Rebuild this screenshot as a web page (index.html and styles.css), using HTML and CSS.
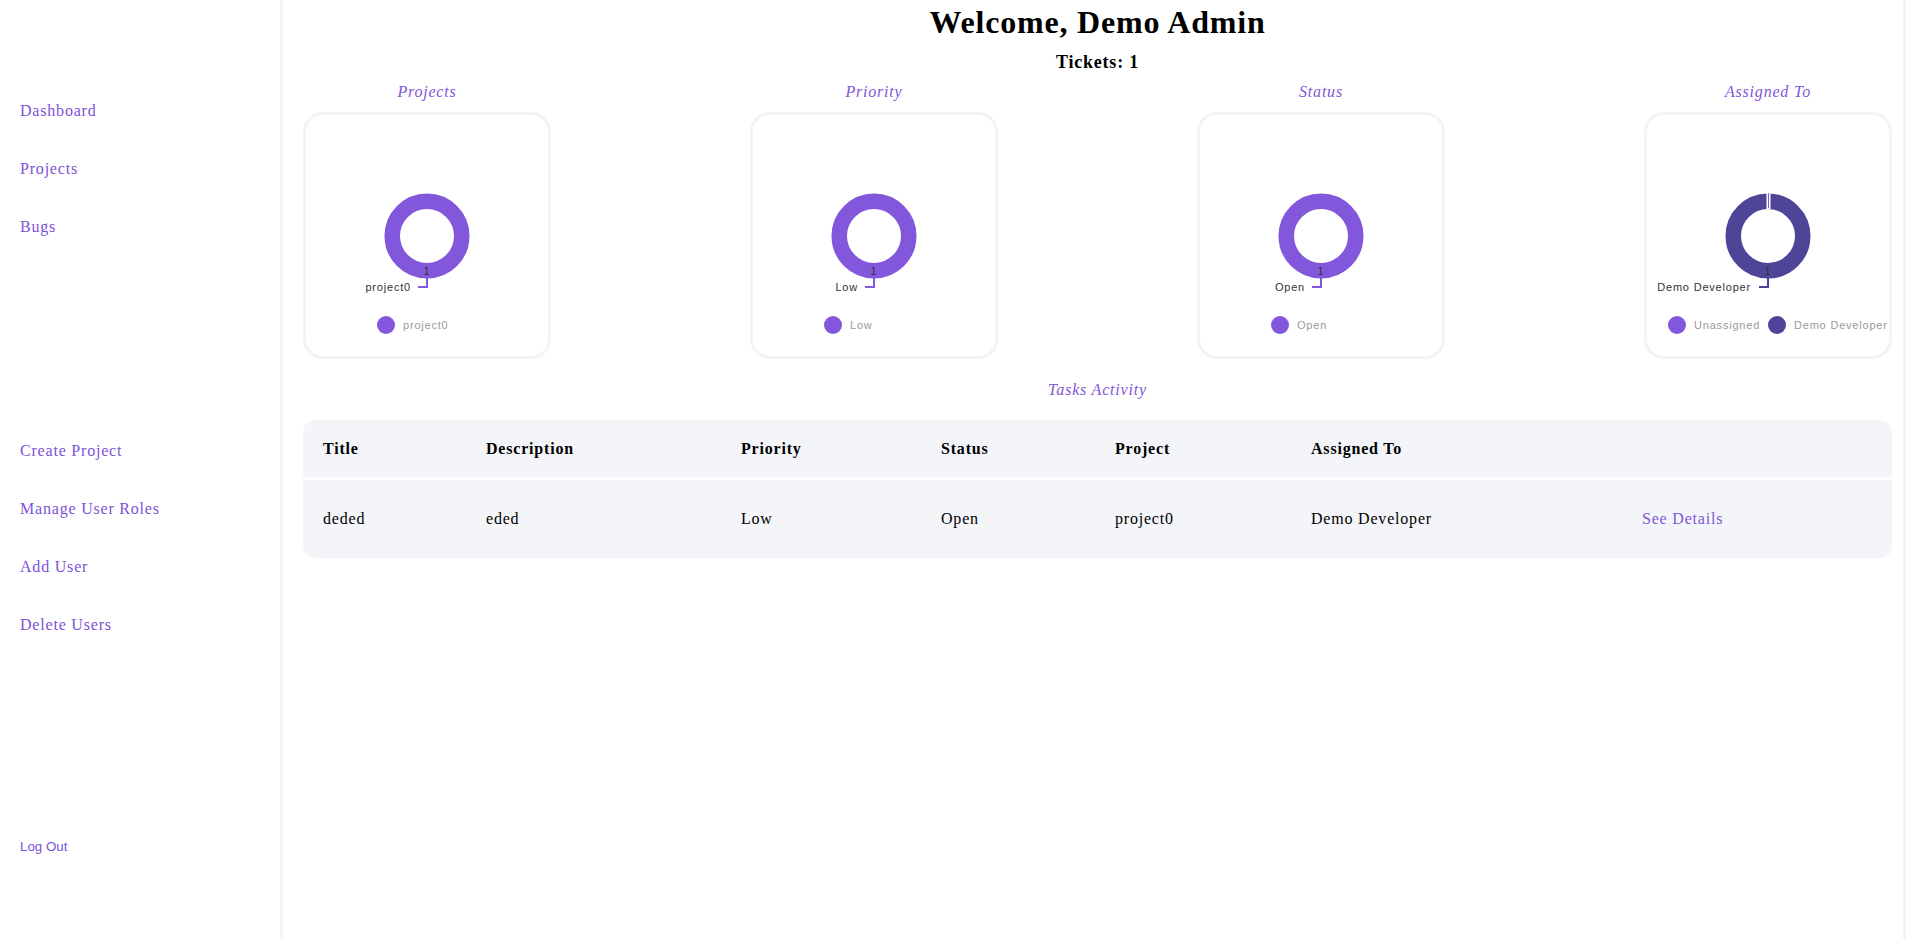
FILE: index.html
```html
<!DOCTYPE html>
<html lang="en">
<head>
<meta charset="utf-8">
<title>Dashboard</title>
<link rel="stylesheet" href="styles.css">
</head>
<body>
<div class="app">
  <aside class="sidebar">
    <nav class="nav nav-top">
      <a class="nav-link" href="#">Dashboard</a>
      <a class="nav-link" href="#">Projects</a>
      <a class="nav-link" href="#">Bugs</a>
    </nav>
    <nav class="nav nav-admin">
      <a class="nav-link" href="#">Create Project</a>
      <a class="nav-link" href="#">Manage User Roles</a>
      <a class="nav-link" href="#">Add User</a>
      <a class="nav-link" href="#">Delete Users</a>
    </nav>
    <button class="logout" type="button">Log Out</button>
  </aside>

  <main class="main">
    <h1 class="welcome">Welcome, Demo Admin</h1>
    <h3 class="tickets">Tickets: 1</h3>

    <section class="charts">
      <div class="chart-col">
        <div class="chart-title">Projects</div>
        <div class="chart-card">
          <svg class="chart-svg" width="242" height="241" viewBox="0 0 242 241">
            <circle cx="121" cy="121" r="34.75" fill="none" stroke="#8257db" stroke-width="15.5"/>
            <text class="arc-label" x="121" y="156">1</text>
            <polyline class="link" points="121,163 121,172 112,172" stroke="#8257db"/>
            <text class="link-label" x="105" y="172" text-anchor="end">project0</text>
            <circle cx="80" cy="210" r="9" fill="#8257db"/>
            <text class="legend-text" x="97" y="210">project0</text>
          </svg>
        </div>
      </div>

      <div class="chart-col">
        <div class="chart-title">Priority</div>
        <div class="chart-card">
          <svg class="chart-svg" width="242" height="241" viewBox="0 0 242 241">
            <circle cx="121" cy="121" r="34.75" fill="none" stroke="#8257db" stroke-width="15.5"/>
            <text class="arc-label" x="121" y="156">1</text>
            <polyline class="link" points="121,163 121,172 112,172" stroke="#8257db"/>
            <text class="link-label" x="105" y="172" text-anchor="end">Low</text>
            <circle cx="80" cy="210" r="9" fill="#8257db"/>
            <text class="legend-text" x="97" y="210">Low</text>
          </svg>
        </div>
      </div>

      <div class="chart-col">
        <div class="chart-title">Status</div>
        <div class="chart-card">
          <svg class="chart-svg" width="242" height="241" viewBox="0 0 242 241">
            <circle cx="121" cy="121" r="34.75" fill="none" stroke="#8257db" stroke-width="15.5"/>
            <text class="arc-label" x="121" y="156">1</text>
            <polyline class="link" points="121,163 121,172 112,172" stroke="#8257db"/>
            <text class="link-label" x="105" y="172" text-anchor="end">Open</text>
            <circle cx="80" cy="210" r="9" fill="#8257db"/>
            <text class="legend-text" x="97" y="210">Open</text>
          </svg>
        </div>
      </div>

      <div class="chart-col">
        <div class="chart-title">Assigned To</div>
        <div class="chart-card">
          <svg class="chart-svg" width="242" height="241" viewBox="0 0 242 241">
            <circle cx="121" cy="121" r="34.75" fill="none" stroke="#4e4599" stroke-width="15.5"/>
            <rect x="119.5" y="77" width="4" height="17" fill="#ffffff"/>
            <rect x="121" y="78" width="1" height="15" fill="#8257db"/>
            <text class="arc-label" x="121" y="156">1</text>
            <polyline class="link" points="121,163 121,172 112,172" stroke="#4e4599"/>
            <text class="link-label" x="104" y="172" text-anchor="end">Demo Developer</text>
            <circle cx="30" cy="210" r="9" fill="#8257db"/>
            <text class="legend-text" x="47" y="210">Unassigned</text>
            <circle cx="130" cy="210" r="9" fill="#4e4599"/>
            <text class="legend-text" x="147" y="210">Demo Developer</text>
          </svg>
        </div>
      </div>
    </section>

    <div class="section-title">Tasks Activity</div>

    <table class="tasks">
      <colgroup>
        <col class="c-title">
        <col class="c-desc">
        <col class="c-prio">
        <col class="c-status">
        <col class="c-project">
        <col class="c-assigned">
        <col class="c-action">
      </colgroup>
      <thead>
        <tr>
          <th>Title</th>
          <th>Description</th>
          <th>Priority</th>
          <th>Status</th>
          <th>Project</th>
          <th>Assigned To</th>
          <th></th>
        </tr>
      </thead>
      <tbody>
        <tr>
          <td>deded</td>
          <td>eded</td>
          <td>Low</td>
          <td>Open</td>
          <td>project0</td>
          <td>Demo Developer</td>
          <td><a class="details" href="#">See Details</a></td>
        </tr>
      </tbody>
    </table>
  </main>
</div>
</body>
</html>
```

FILE: styles.css
```css
html, body {
  margin: 0;
  padding: 0;
  background: #ffffff;
}

body {
  font-family: "Liberation Serif", "Times New Roman", serif;
  font-size: 16px;
  letter-spacing: 0.05em;
  color: #000000;
}

.app {
  display: flex;
  height: 939px;
  width: 1906px;
}

/* Sidebar */
.sidebar {
  width: 280px;
  flex: 0 0 280px;
  border-right: 3px solid #f2f2f7;
  display: flex;
  flex-direction: column;
}

.nav {
  display: flex;
  flex-direction: column;
}

.nav-top {
  padding-top: 82px;
}

.nav-admin {
  margin-top: 166px;
}

.nav-link {
  display: block;
  height: 58px;
  line-height: 58px;
  padding-left: 20px;
  color: #7c52d9;
  text-decoration: none;
  font-size: 16px;
}

.logout {
  margin-top: auto;
  margin-bottom: 84px;
  align-self: flex-start;
  margin-left: 20px;
  padding: 0;
  border: none;
  background: transparent;
  color: #7c52d9;
  font-family: "Liberation Sans", Arial, sans-serif;
  font-size: 13.333px;
  line-height: 16px;
  letter-spacing: normal;
  cursor: pointer;
}

/* Main */
.main {
  flex: 1;
  border-right: 3px solid #f2f2f7;
  padding: 0 11px 0 20px;
  min-width: 0;
}

.welcome {
  margin: 4px 0 0;
  font-size: 32px;
  line-height: 37px;
  text-align: center;
  font-weight: bold;
}

.tickets {
  margin: 10px 0 0;
  font-size: 18px;
  line-height: 22px;
  text-align: center;
  font-weight: bold;
}

.charts {
  margin-top: 10px;
  display: flex;
  justify-content: space-between;
}

.chart-col {
  width: 248px;
  display: flex;
  flex-direction: column;
  align-items: center;
}

.chart-title,
.section-title {
  font-style: italic;
  color: #7f56d9;
  font-size: 16px;
  line-height: 18px;
  text-align: center;
}

.chart-card {
  margin-top: 11px;
  width: 248px;
  height: 247px;
  box-sizing: border-box;
  border: 3px solid #f2f3f7;
  border-radius: 20px;
}

.chart-svg {
  display: block;
  overflow: visible;
  font-family: "Liberation Sans", Arial, sans-serif;
  font-size: 11px;
}

.arc-label {
  fill: #333333;
  text-anchor: middle;
  dominant-baseline: central;
}

.link {
  fill: none;
  stroke-width: 2;
}

.link-label {
  fill: #333333;
  dominant-baseline: central;
}

.legend-text {
  fill: #999999;
  dominant-baseline: central;
}

.section-title {
  margin-top: 22px;
}

/* Table */
.tasks {
  margin-top: 21px;
  width: 100%;
  table-layout: fixed;
  border-collapse: separate;
  border-spacing: 0;
}

.c-title { width: 163px; }
.c-desc { width: 255px; }
.c-prio { width: 200px; }
.c-status { width: 174px; }
.c-project { width: 196px; }
.c-assigned { width: 331px; }
.c-action { width: 270px; }

.tasks th,
.tasks td {
  background: #f4f5f9;
  text-align: left;
  padding: 0 0 0 20px;
  font-size: 16px;
}

.tasks th {
  height: 57px;
  font-weight: bold;
  border-bottom: 3px solid #ffffff;
}

.tasks td {
  height: 78px;
}

.tasks thead th:first-child { border-top-left-radius: 12px; }
.tasks thead th:last-child { border-top-right-radius: 12px; }
.tasks tbody td:first-child { border-bottom-left-radius: 12px; }
.tasks tbody td:last-child { border-bottom-right-radius: 12px; }

.details {
  color: #7f56d9;
  text-decoration: none;
}
```
